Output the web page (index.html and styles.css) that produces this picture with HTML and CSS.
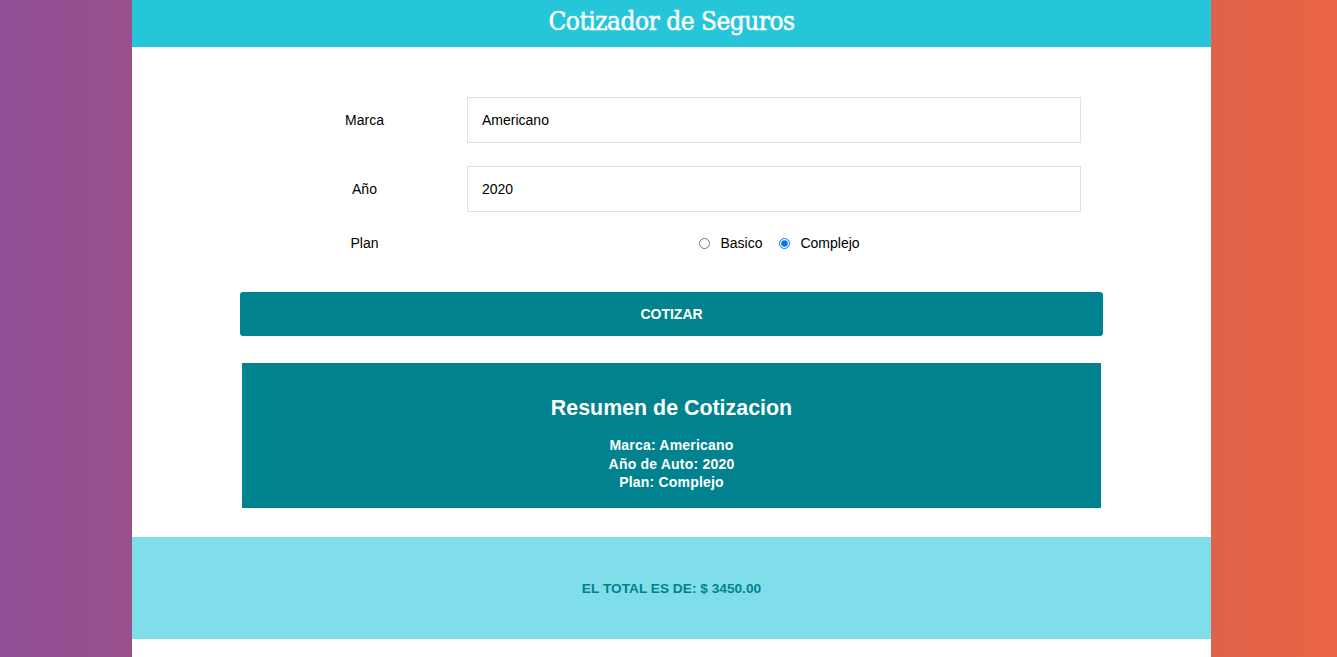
FILE: index.html
```html
<!DOCTYPE html>
<html lang="es">
<head>
<meta charset="utf-8">
<title>Cotizador de Seguros</title>
<link rel="stylesheet" href="styles.css">
</head>
<body>
<div class="contenedor">
  <header class="header">
    <h1 class="titulo">Cotizador de Seguros</h1>
  </header>
  <div class="contenido">
    <form class="formulario">
      <div class="campo">
        <label class="etiqueta">Marca</label>
        <input class="entrada" type="text" value="Americano">
      </div>
      <div class="campo">
        <label class="etiqueta">Año</label>
        <input class="entrada" type="text" value="2020">
      </div>
      <div class="campo campo-plan">
        <label class="etiqueta">Plan</label>
        <div class="opciones">
          <input class="radio" type="radio" name="plan" value="basico"> <span class="opcion">Basico</span>
          <input class="radio" type="radio" name="plan" value="completo" checked> <span class="opcion">Complejo</span>
        </div>
      </div>
      <button class="boton" type="button">COTIZAR</button>
    </form>
    <div class="resumen">
      <h2 class="resumen-titulo">Resumen de Cotizacion</h2>
      <ul class="resumen-lista">
        <li>Marca: Americano</li>
        <li>Año de Auto: 2020</li>
        <li>Plan: Complejo</li>
      </ul>
    </div>
  </div>
  <div class="total">
    <p class="total-texto">EL TOTAL ES DE: $ 3450.00</p>
  </div>
</div>
</body>
</html>
```
FILE: styles.css
```css
html, body {
  margin: 0;
  padding: 0;
  height: 100%;
}
body {
  box-sizing: border-box;
  padding-left: 6px;
  background: linear-gradient(to right, #904e95, #e96443);
  font-family: "Liberation Sans", Arial, sans-serif;
}
.contenedor {
  width: 1079px;
  margin: 0 auto;
  min-height: 100%;
  background: #ffffff;
}
.header {
  background: #26c6da;
  height: 47px;
  box-sizing: border-box;
  padding-bottom: 6px;
  display: flex;
  align-items: center;
  justify-content: center;
}
.titulo {
  margin: 0;
  color: #ffffff;
  font-family: "DejaVu Serif Condensed", "DejaVu Serif", serif;
  font-weight: normal;
  font-size: 26px;
  letter-spacing: -0.5px;
  -webkit-text-stroke: 0.5px #ffffff;
}
.contenido {
  padding: 50px 108px 29px;
}
.formulario {
  display: flex;
  flex-direction: column;
}
.campo {
  display: flex;
  align-items: center;
  padding: 0 22px;
  margin-bottom: 23px;
}
.etiqueta {
  flex: 0 0 205px;
  text-align: center;
  font-size: 14px;
  color: #000;
}
.entrada {
  flex: 0 0 614px;
  box-sizing: border-box;
  height: 46px;
  border: 1px solid #e1e1e1;
  padding: 0 14px;
  font-family: "Liberation Sans", Arial, sans-serif;
  font-size: 14px;
  color: #000;
  outline: none;
}
.campo-plan {
  margin-top: 0;
  margin-bottom: 41px;
}
.opciones {
  flex: 0 0 614px;
  display: flex;
  align-items: center;
  justify-content: center;
  padding-left: 6px;
  box-sizing: border-box;
  font-size: 14px;
}
.radio {
  margin: 0 10px 0 5px;
  width: 11px;
  height: 11px;
}
.opcion + .radio {
  margin-left: 17px;
}
.boton {
  height: 44px;
  width: 100%;
  border: none;
  border-radius: 3px;
  background: #00838f;
  color: #ffffff;
  font-family: "Liberation Sans", Arial, sans-serif;
  font-weight: bold;
  font-size: 14px;
}
.resumen {
  margin: 27px 2px 0;
  height: 145px;
  box-sizing: border-box;
  background: #00838f;
  color: #ffffff;
  text-align: center;
  padding-top: 33px;
}
.resumen-titulo {
  margin: 0 0 15px;
  font-size: 21.4px;
  font-weight: bold;
  line-height: 25px;
}
.resumen-lista {
  list-style: none;
  margin: 0;
  padding: 0;
  font-size: 14px;
  font-weight: bold;
  line-height: 18.5px;
  letter-spacing: 0.2px;
}
.total {
  background: #80deea;
  height: 102px;
  display: flex;
  align-items: center;
  justify-content: center;
}
.total-texto {
  margin: 0;
  color: #00838f;
  font-weight: bold;
  font-size: 13.7px;
}
```
